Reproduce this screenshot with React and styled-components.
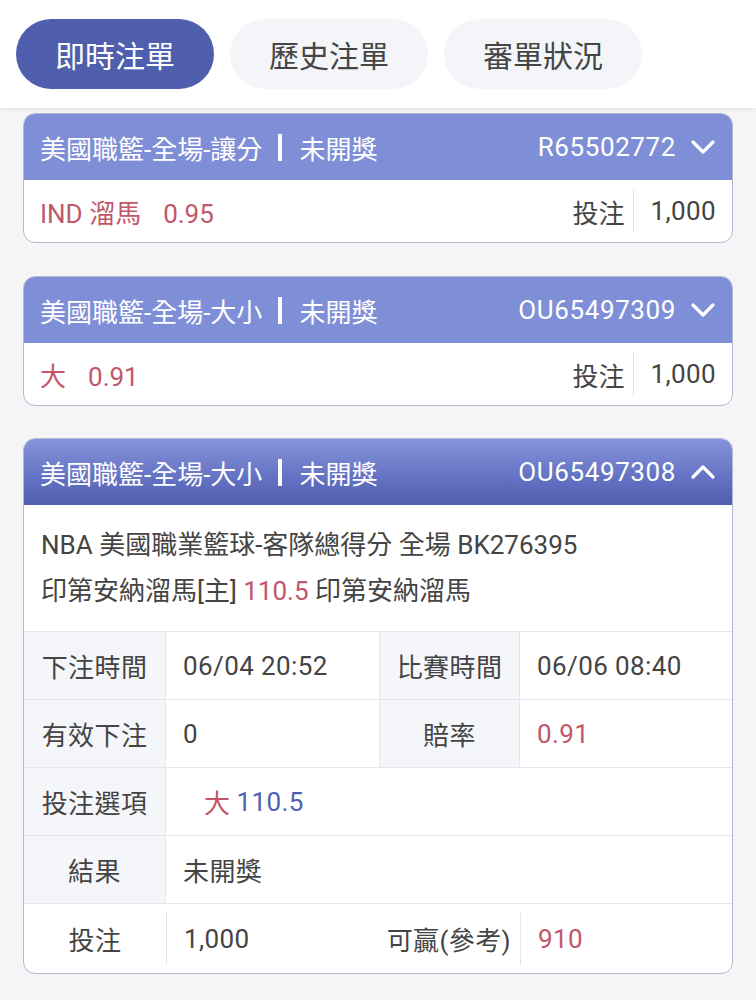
import React from "react";
import styled, { createGlobalStyle } from "styled-components";

const GlobalStyle = createGlobalStyle`
  body {
    margin: 0;
    background: #f5f5f7;
    font-family: Roboto, "Noto Sans CJK TC", "Noto Sans", sans-serif;
    color: #444;
  }
`;

const tabs = ["即時注單", "歷史注單", "審單狀況"];

const Chevron = ({ up }) => (
  <svg width="26" height="16" viewBox="0 0 26 16">
    <polyline
      points={up ? "3,13 13,3 23,13" : "3,3 13,13 23,3"}
      fill="none"
      stroke="#fff"
      strokeWidth="3.2"
      strokeLinecap="round"
      strokeLinejoin="round"
    />
  </svg>
);

const App = () => {
  return (
    <Page>
      <GlobalStyle />
      <TopBar>
        {tabs.map((t, i) => (
          <Tab key={t} $active={i === 0}>{t}</Tab>
        ))}
      </TopBar>
      <List>
        <Card>
          <CardHead>
            <HeadTitle>美國職籃-全場-讓分<Bar />未開獎</HeadTitle>
            <HeadRight>R65502772<Chevron /></HeadRight>
          </CardHead>
          <Summary>
            <Pick>IND 溜馬<Odds>0.95</Odds></Pick>
            <Stake>
              <span>投注</span>
              <VLine />
              <Num>1,000</Num>
            </Stake>
          </Summary>
        </Card>

        <Card>
          <CardHead>
            <HeadTitle>美國職籃-全場-大小<Bar />未開獎</HeadTitle>
            <HeadRight>OU65497309<Chevron /></HeadRight>
          </CardHead>
          <Summary>
            <Pick>大<Odds>0.91</Odds></Pick>
            <Stake>
              <span>投注</span>
              <VLine />
              <Num>1,000</Num>
            </Stake>
          </Summary>
        </Card>

        <Card $tight>
          <CardHead $open>
            <HeadTitle>美國職籃-全場-大小<Bar />未開獎</HeadTitle>
            <HeadRight>OU65497308<Chevron up /></HeadRight>
          </CardHead>
          <Desc>
            <div>NBA 美國職業籃球-客隊總得分 全場 BK276395</div>
            <div>印第安納溜馬[主] <Red>110.5</Red> 印第安納溜馬</div>
          </Desc>
          <Table>
            <Cell $label>下注時間</Cell>
            <Cell>06/04 20:52</Cell>
            <Cell $label>比賽時間</Cell>
            <Cell $last>06/06 08:40</Cell>

            <Cell $label>有效下注</Cell>
            <Cell>0</Cell>
            <Cell $label>賠率</Cell>
            <Cell $last><Red>0.91</Red></Cell>

            <Cell $label>投注選項</Cell>
            <Cell $span $indent><Red>大</Red><Blue>110.5</Blue></Cell>

            <Cell $label>結果</Cell>
            <Cell $span>未開獎</Cell>
          </Table>
          <FootRow>
            <FootCell $center>投注</FootCell>
            <FootCell $sep>1,000</FootCell>
            <FootCell $right>可贏(參考)</FootCell>
            <FootCell $sep><Red>910</Red></FootCell>
          </FootRow>
        </Card>
      </List>
    </Page>
  );
};

const Page = styled.div`
  min-height: 1000px;
  background: #f5f5f7;
`;

const TopBar = styled.div`
  height: 108px;
  box-sizing: border-box;
  background: #fff;
  display: flex;
  align-items: center;
  gap: 16px;
  padding: 0 16px;
  box-shadow: 0 2px 4px rgba(0, 0, 0, 0.06);
  position: relative;
  z-index: 1;
`;

const Tab = styled.div`
  width: 198px;
  height: 70px;
  border-radius: 35px;
  display: flex;
  align-items: center;
  justify-content: center;
  font-size: 30px;
  background: ${(p) => (p.$active ? "#4f5fae" : "#f4f5f9")};
  color: ${(p) => (p.$active ? "#fff" : "#454545")};
`;

const List = styled.div`
  padding: 5px 23px 20px;
  display: flex;
  flex-direction: column;
  gap: 33px;
`;

const Card = styled.div`
  background: #fff;
  border: 1px solid #b4b9cc;
  border-radius: 12px;
  overflow: hidden;
  margin-top: ${(p) => (p.$tight ? "-1px" : "0")};
`;

const CardHead = styled.div`
  height: 66px;
  display: flex;
  align-items: center;
  justify-content: space-between;
  padding: 0 16px 0 16px;
  color: #fff;
  font-size: 26px;
  background: ${(p) =>
    p.$open ? "linear-gradient(180deg, #8794db 0%, #6574c4 55%, #4e5dad 100%)" : "#7f8fd7"};
`;

const HeadTitle = styled.div`
  display: flex;
  align-items: center;
`;

const Bar = styled.span`
  display: inline-block;
  width: 4px;
  height: 27px;
  background: #fff;
  margin: 0 17px 0 16px;
`;

const HeadRight = styled.div`
  display: flex;
  align-items: center;
  gap: 14px;
  letter-spacing: 0.6px;
`;

const Summary = styled.div`
  height: 62px;
  display: flex;
  align-items: center;
  justify-content: space-between;
  padding: 0 16px;
  font-size: 26px;
`;

const Pick = styled.div`
  color: #c2566a;
`;

const Odds = styled.span`
  margin-left: 22px;
`;

const Stake = styled.div`
  display: flex;
  align-items: center;
  height: 100%;
  color: #444;
`;

const Num = styled.span`
  letter-spacing: 0.4px;
`;

const VLine = styled.span`
  width: 1px;
  height: 44px;
  background: #e2e4ea;
  margin: 0 16px 0 9px;
`;

const Desc = styled.div`
  padding: 17px 17px 17px;
  font-size: 26px;
  line-height: 46px;
  color: #444;
  border-bottom: 1px solid #e4e6ee;
`;

const Red = styled.span`
  color: #c2566a;
`;

const Blue = styled.span`
  color: #4f5fb5;
  margin-left: 6px;
`;

const Table = styled.div`
  display: grid;
  grid-template-columns: 142px 214px 140px 1fr;
  grid-auto-rows: 68px;
  font-size: 26px;
  letter-spacing: 0.4px;
`;

const Cell = styled.div`
  display: flex;
  align-items: center;
  justify-content: ${(p) => (p.$label ? "center" : "flex-start")};
  padding-left: ${(p) => (p.$label ? "0" : p.$indent ? "38px" : "17px")};
  background: ${(p) => (p.$label ? "#f5f6fa" : "#fff")};
  border-bottom: 1px solid #e4e6ee;
  border-right: ${(p) => (p.$last || p.$span ? "none" : "1px solid #e4e6ee")};
  grid-column: ${(p) => (p.$span ? "span 3" : "auto")};
  color: #444;
`;

const FootRow = styled.div`
  display: grid;
  grid-template-columns: 142px 214px 140px 1fr;
  height: 69px;
  font-size: 26px;
  letter-spacing: 0.4px;
`;

const FootCell = styled.div`
  display: flex;
  align-items: center;
  justify-content: ${(p) => (p.$center ? "center" : p.$right ? "flex-end" : "flex-start")};
  padding: ${(p) => (p.$right ? "0 9px 0 0" : p.$center ? "0" : "0 0 0 17px")};
  color: #444;
  border-left: ${(p) => (p.$sep ? "1px solid #e4e6ee" : "none")};
  margin: ${(p) => (p.$sep ? "8px 0" : "0")};
`;

export default App;
